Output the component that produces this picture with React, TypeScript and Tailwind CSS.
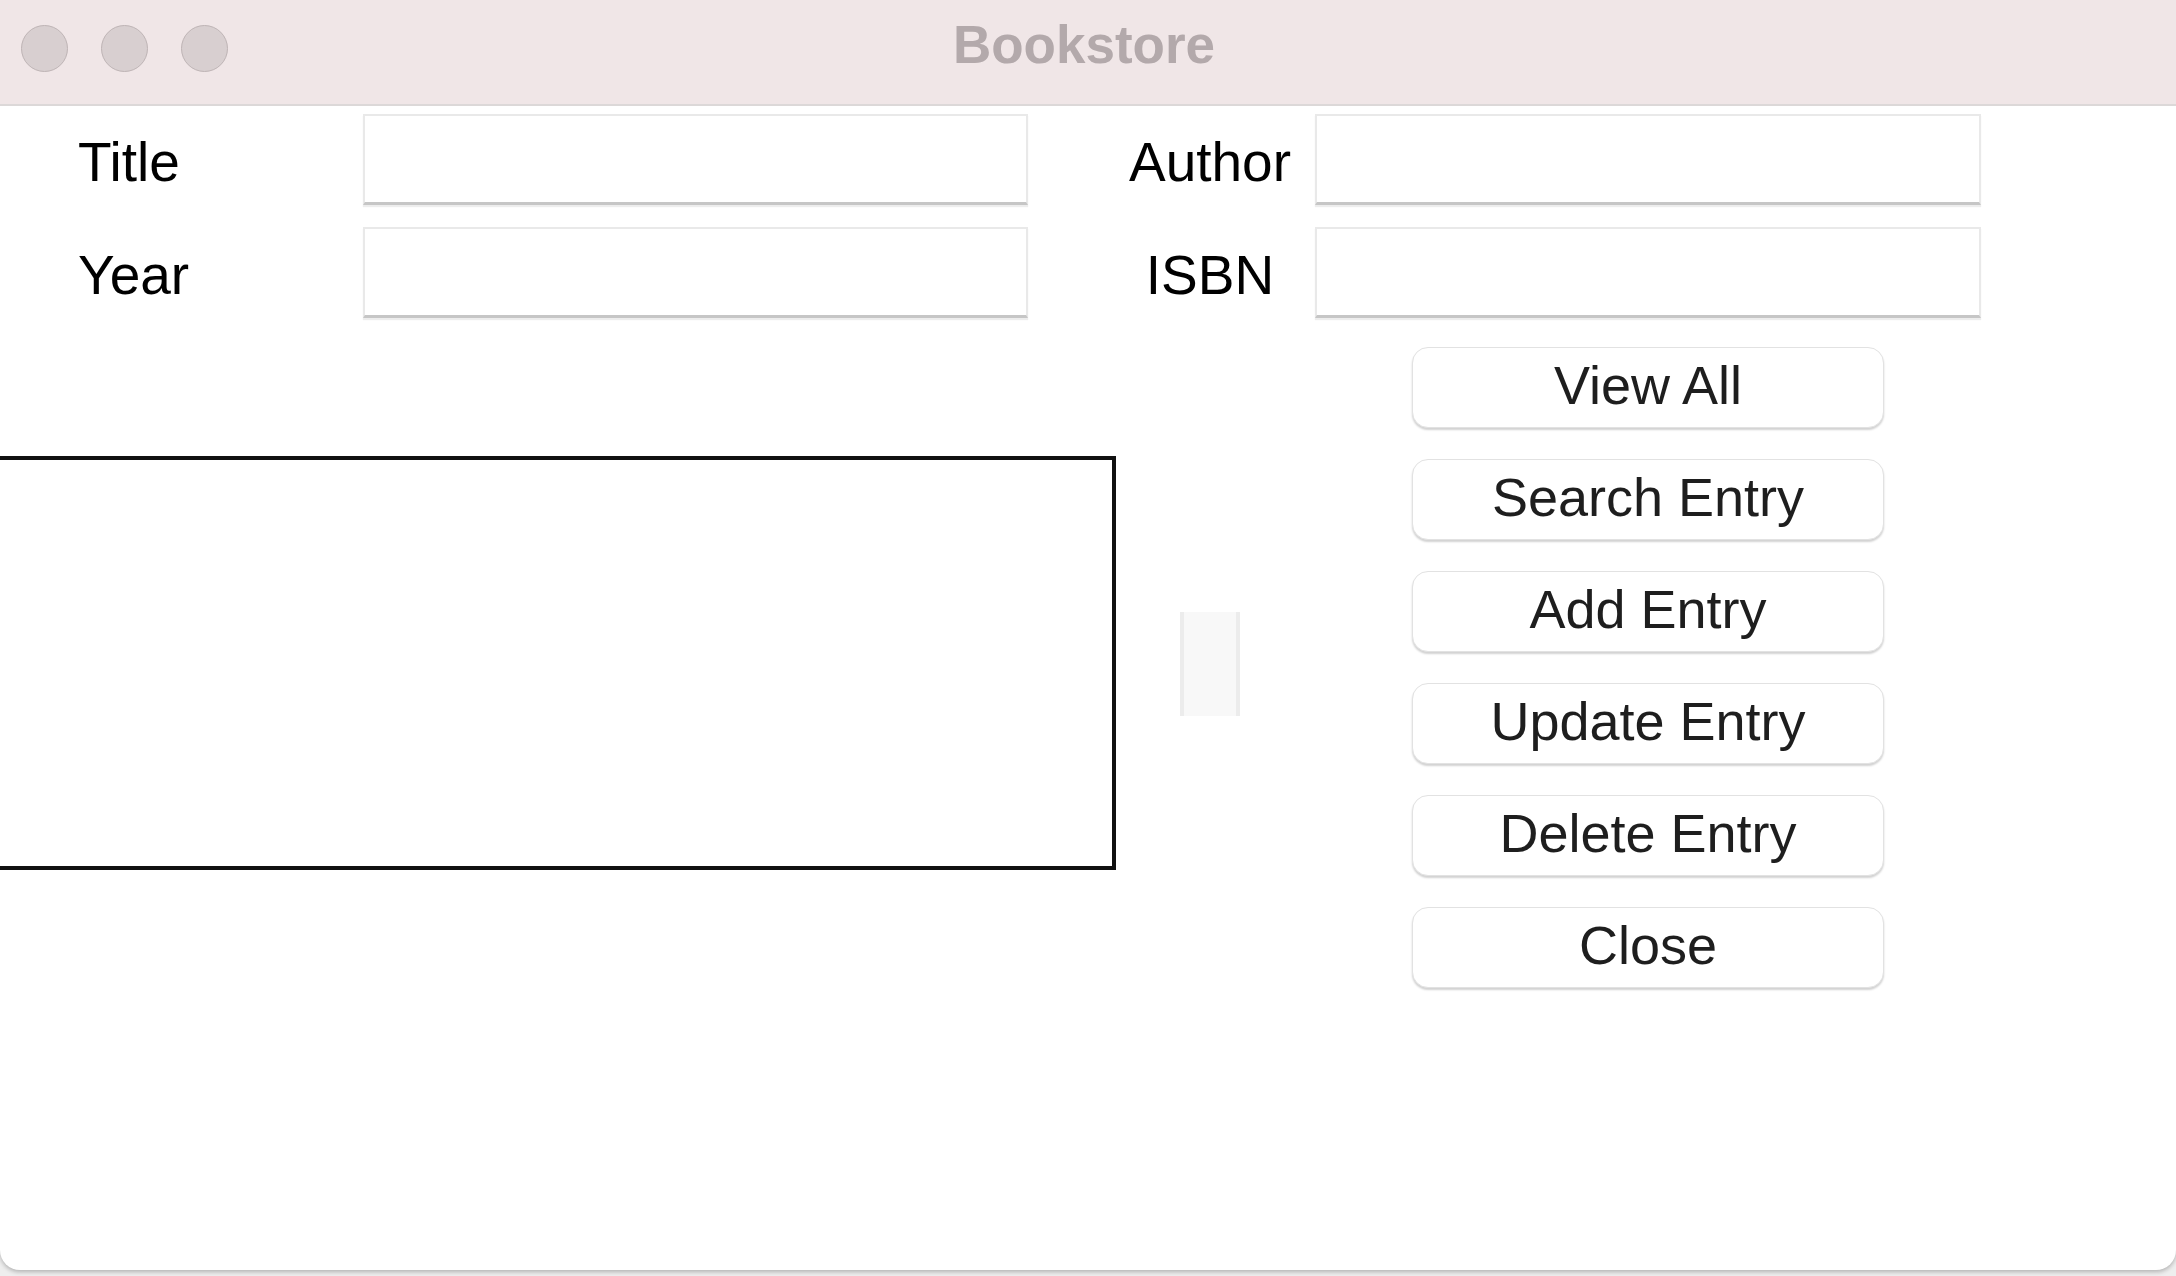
import React from "react";

const font = { fontFamily: '"Liberation Sans", Arial, sans-serif' };

function Entry() {
  return (
    <input
      type="text"
      className="h-[91px] bg-white border-2 border-[#e9e9e9] border-b-[3px] border-b-[#c6c6c6] shadow-[0_2px_1px_rgba(0,0,0,0.07)] outline-none"
    />
  );
}

function Btn({ label }: { label: string }) {
  return (
    <button className="h-[81px] w-[472px] bg-white rounded-[16px] border border-[#e2e2e2] shadow-[0_2px_2px_rgba(0,0,0,0.18)] text-[54px] leading-none text-[#1e1e1e] pb-[5px] flex items-center justify-center">
      {label}
    </button>
  );
}

export default function App() {
  const buttons = ["View All", "Search Entry", "Add Entry", "Update Entry", "Delete Entry", "Close"];
  return (
    <div className="w-[2176px] h-[1276px] bg-[#eeeeee] overflow-hidden" style={font}>
      <div className="h-[1270px] bg-white rounded-b-[20px] shadow-[0_2px_4px_rgba(0,0,0,0.25)] flex flex-col overflow-hidden">
        {/* Title bar */}
        <div className="h-[106px] shrink-0 bg-[#f0e6e7] border-b-2 border-[#dcd8d8] grid grid-cols-[1fr_auto_1fr]">
          <div className="flex items-start pt-[25px] pl-[21px] gap-[33px]">
            <div className="w-[47px] h-[47px] rounded-full bg-[#d8cfd0] border-[1.5px] border-[#beb4b5]" />
            <div className="w-[47px] h-[47px] rounded-full bg-[#d8cfd0] border-[1.5px] border-[#beb4b5]" />
            <div className="w-[47px] h-[47px] rounded-full bg-[#d8cfd0] border-[1.5px] border-[#beb4b5]" />
          </div>
          <div className="pt-[18px] pr-[8px] text-[53px] leading-none font-bold text-[#b3a9ab]">Bookstore</div>
          <div />
        </div>

        {/* Form rows */}
        <div className="flex flex-col gap-[22px] pt-[8px]">
          <div className="flex items-center">
            <div className="w-[260px] pl-[78px] pt-[6px] text-left text-[55px] leading-none text-black">Title</div>
            <div className="ml-[103px] w-[665px] flex flex-col"><Entry /></div>
            <div className="ml-[77px] w-[210px] pt-[6px] text-center text-[55px] leading-none text-black">Author</div>
            <div className="w-[666px] flex flex-col"><Entry /></div>
          </div>
          <div className="flex items-center">
            <div className="w-[260px] pl-[78px] pt-[6px] text-left text-[55px] leading-none text-black">Year</div>
            <div className="ml-[103px] w-[665px] flex flex-col"><Entry /></div>
            <div className="ml-[79px] w-[206px] pt-[6px] text-center text-[55px] leading-none text-black">ISBN</div>
            <div className="ml-[2px] w-[666px] flex flex-col"><Entry /></div>
          </div>
        </div>

        {/* Lower area */}
        <div className="flex items-start mt-[29px]">
          <div className="ml-[-20px] mt-[109px] w-[1136px] h-[414px] border-[4px] border-[#111] bg-white shrink-0" />
          <div className="ml-[64px] mt-[265px] w-[60px] h-[104px] bg-[#f8f8f8] border-x-[4px] border-[#ececec] shrink-0" />
          <div className="ml-[172px] flex flex-col gap-[31px]">
            {buttons.map((b) => (
              <Btn key={b} label={b} />
            ))}
          </div>
        </div>
      </div>
    </div>
  );
}
